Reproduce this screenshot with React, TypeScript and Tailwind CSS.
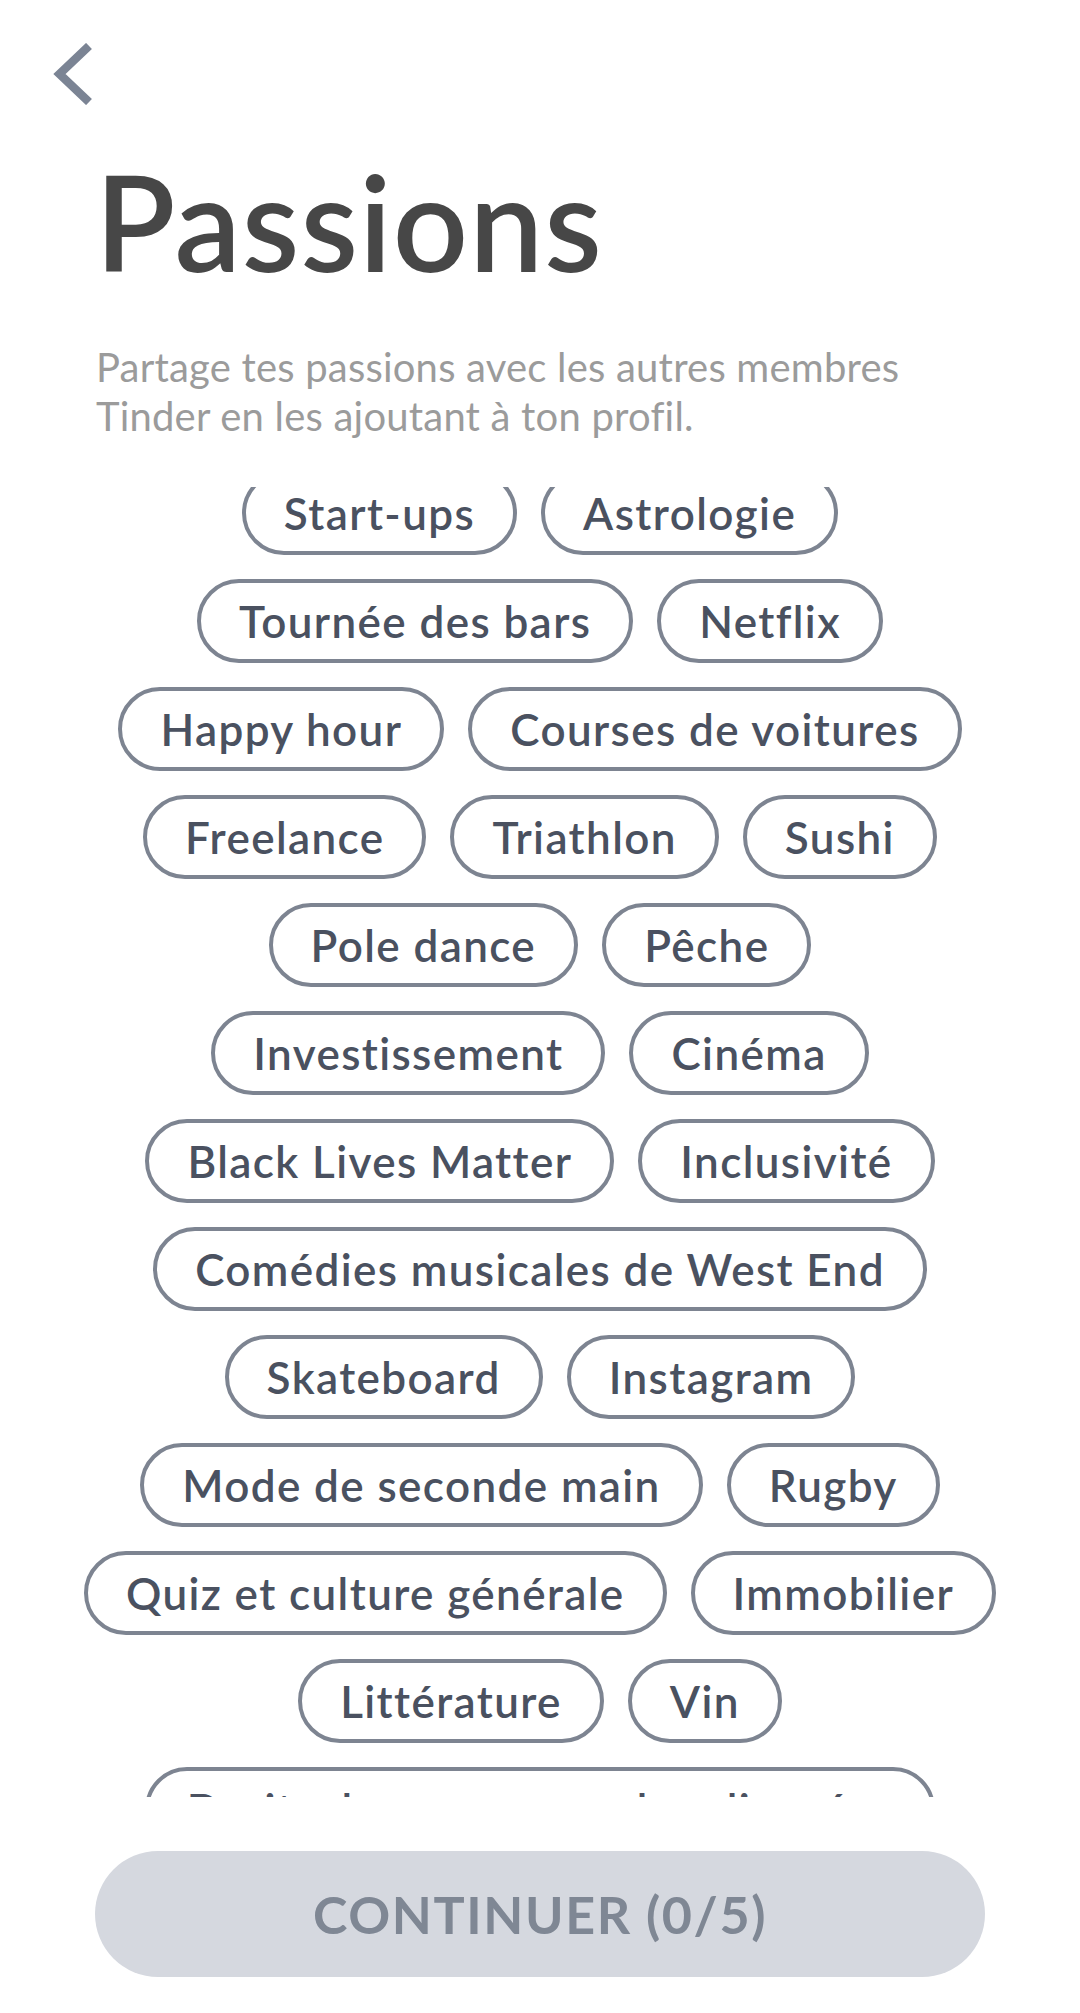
const rows: string[][] = [
  ['Start-ups', 'Astrologie'],
  ['Tournée des bars', 'Netflix'],
  ['Happy hour', 'Courses de voitures'],
  ['Freelance', 'Triathlon', 'Sushi'],
  ['Pole dance', 'Pêche'],
  ['Investissement', 'Cinéma'],
  ['Black Lives Matter', 'Inclusivité'],
  ['Comédies musicales de West End'],
  ['Skateboard', 'Instagram'],
  ['Mode de seconde main', 'Rugby'],
  ['Quiz et culture générale', 'Immobilier'],
  ['Littérature', 'Vin'],
  ['Droits des personnes handicapées'],
]

function PassionChip({ label }: { label: string }) {
  return (
    <button
      type="button"
      className="flex h-[84px] shrink-0 items-center rounded-full border-4 border-[#7d8491] bg-white px-[38px] text-[44px] font-semibold leading-none tracking-[1.4px] text-[#4a5160]"
    >
      {label}
    </button>
  )
}

export default function App() {
  return (
    <div
      className="flex h-[2013px] w-[1080px] flex-col overflow-hidden bg-white"
      style={{ fontFamily: 'Lato, "Open Sans", sans-serif' }}
    >
      <div className="pl-[52px] pt-[43px]">
        <svg width="42" height="62" viewBox="0 0 42 62" fill="none" aria-hidden>
          <polyline points="37,3 7.5,31 37,59" stroke="#7b8494" strokeWidth="8.5" strokeLinejoin="miter" />
        </svg>
      </div>

      <h1 className="mt-[50px] pl-[95px] text-[132px] font-semibold leading-none tracking-[1px] text-[#474747]">
        Passions
      </h1>

      <p className="mt-[56px] pl-[96px] pr-[90px] text-[40px] leading-[49px] tracking-[0.2px] text-[#9b9b9b]">
        Partage tes passions avec les autres membres Tinder en les ajoutant à ton profil.
      </p>

      <div className="mt-[46px] h-[1310px] overflow-hidden">
        <div className="-mt-[16px] flex flex-col gap-6">
          {rows.map((row, i) => (
            <div key={i} className="flex justify-center gap-6">
              {row.map((label) => (
                <PassionChip key={label} label={label} />
              ))}
            </div>
          ))}
        </div>
      </div>

      <div className="mt-[54px] px-[95px]">
        <button
          type="button"
          disabled
          className="flex h-[126px] w-full items-center justify-center rounded-full bg-[#d5d8df] text-[52px] font-bold tracking-[1.6px] text-[#7f8794]"
        >
          CONTINUER (0/5)
        </button>
      </div>
    </div>
  )
}
